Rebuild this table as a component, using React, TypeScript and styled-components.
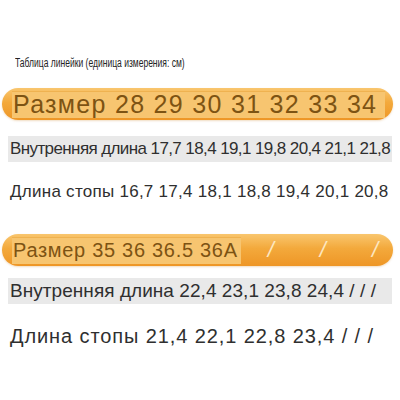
import React from "react";
import styled, { createGlobalStyle } from "styled-components";

const GlobalStyle = createGlobalStyle`
  html, body {
    margin: 0;
    padding: 0;
    background: #ffffff;
  }
  body {
    font-family: "Liberation Sans", Arial, sans-serif;
  }
`;

const Page = styled.div`
  width: 400px;
  height: 400px;
  overflow: hidden;
  display: flex;
  flex-direction: column;
  padding-top: 56px;
  box-sizing: border-box;
`;

const Caption = styled.div`
  margin-left: 15px;
  font-size: 12px;
  line-height: 14px;
  color: #222;
  transform: scaleX(0.71);
  transform-origin: left center;
  white-space: nowrap;
`;

const Bar = styled.div<{ $top: number }>`
  margin: ${({ $top }) => $top}px 7px 0 2px;
  height: 32px;
  border-radius: 16px;
  background: linear-gradient(180deg, #f9c66e 0%, #f3a93c 45%, #ee9626 100%);
  box-shadow: 0 1px 2px rgba(200, 120, 20, 0.25);
  display: flex;
  align-items: center;
  padding: 0 8px 0 10px;
  box-sizing: border-box;
`;

const Band = styled.div<{ $grow?: boolean; $size: number; $spacing: number }>`
  height: 27px;
  ${({ $grow }) => ($grow ? "flex: 1;" : "padding-right: 3px;")}
  background: #f7c570;
  border-top: 1px solid #efb250;
  box-sizing: border-box;
  display: flex;
  align-items: center;
  padding-left: 1px;
  color: #7d5313;
  font-size: ${({ $size }) => $size}px;
  letter-spacing: ${({ $spacing }) => $spacing}px;
  white-space: nowrap;
`;

const Slashes = styled.div`
  flex: 1;
  display: flex;
  gap: 46px;
  padding-left: 27px;
  color: #fde7c0;
  font-size: 22px;
  font-style: italic;
  font-weight: 300;
`;

const Row = styled.div<{ $shaded?: boolean; $top: number; $size: number; $spacing: number }>`
  margin: ${({ $top }) => $top}px 8px 0 8px;
  height: 26px;
  display: flex;
  align-items: center;
  padding-left: 2px;
  background: ${({ $shaded }) => ($shaded ? "#e9e9e9" : "transparent")};
  color: #2f2f2f;
  font-size: ${({ $size }) => $size}px;
  letter-spacing: ${({ $spacing }) => $spacing}px;
  white-space: nowrap;
`;

export default function App() {
  return (
    <>
      <GlobalStyle />
      <Page>
        <Caption>Таблица линейки (единица измерения: см)</Caption>
        <Bar $top={18}>
          <Band $grow $size={25} $spacing={1.3}>
            Размер 28 29 30 31 32 33 34
          </Band>
        </Bar>
        <Row $shaded $top={16} $size={17} $spacing={-0.6}>
          Внутренняя длина 17,7 18,4 19,1 19,8 20,4 21,1 21,8
        </Row>
        <Row $top={17} $size={17} $spacing={0.27}>
          Длина стопы 16,7 17,4 18,1 18,8 19,4 20,1 20,8
        </Row>
        <Bar $top={29}>
          <Band $size={20} $spacing={0.7}>
            Размер 35 36 36.5 36A
          </Band>
          <Slashes>
            <span>/</span>
            <span>/</span>
            <span>/</span>
          </Slashes>
        </Bar>
        <Row $shaded $top={12} $size={19} $spacing={0.05}>
          Внутренняя длина 22,4 23,1 23,8 24,4 / / /
        </Row>
        <Row $top={19} $size={20} $spacing={0.9}>
          Длина стопы 21,4 22,1 22,8 23,4 / / /
        </Row>
      </Page>
    </>
  );
}
